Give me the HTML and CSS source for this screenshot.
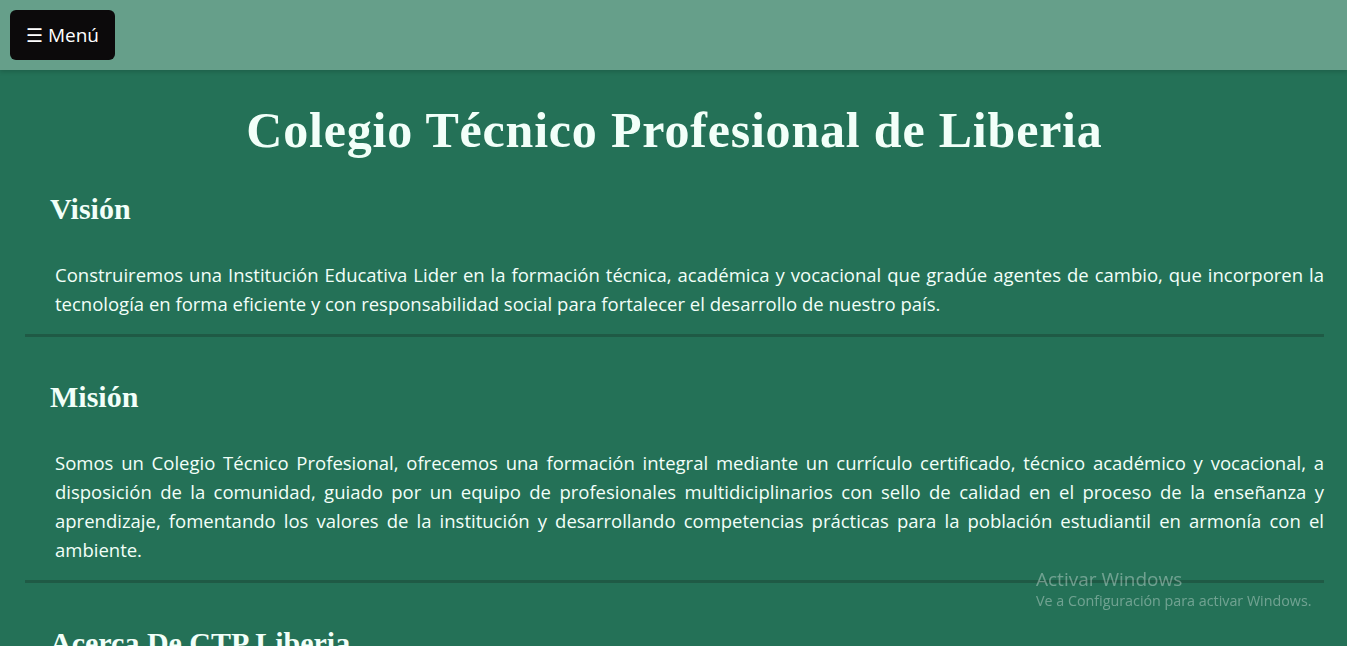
FILE: index.html
```html
<!DOCTYPE html>
<html lang="es">
<head>
<meta charset="utf-8">
<title>CTP Liberia</title>
<link rel="stylesheet" href="styles.css">
</head>
<body>
<header class="topbar">
  <button class="menu-btn">☰ Menú</button>
</header>
<main class="content">
  <h1 class="title">Colegio Técnico Profesional de Liberia</h1>
  <section class="block">
    <h2 class="block-title">Visión</h2>
    <p class="block-text">Construiremos una Institución Educativa Lider en la formación técnica, académica y vocacional que gradúe agentes de cambio, que incorporen la tecnología en forma eficiente y con responsabilidad social para fortalecer el desarrollo de nuestro país.</p>
  </section>
  <hr class="divider">
  <section class="block">
    <h2 class="block-title">Misión</h2>
    <p class="block-text">Somos un Colegio Técnico Profesional, ofrecemos una formación integral mediante un currículo certificado, técnico académico y vocacional, a disposición de la comunidad, guiado por un equipo de profesionales multidiciplinarios con sello de calidad en el proceso de la enseñanza y aprendizaje, fomentando los valores de la institución y desarrollando competencias prácticas para la población estudiantil en armonía con el ambiente.</p>
  </section>
  <hr class="divider">
  <section class="block">
    <h2 class="block-title">Acerca De CTP Liberia</h2>
  </section>
</main>
<div class="watermark">
  <div class="wm-title">Activar Windows</div>
  <div class="wm-sub">Ve a Configuración para activar Windows.</div>
</div>
</body>
</html>
```
FILE: styles.css
```css
html, body {
  margin: 0;
  padding: 0;
}
body {
  background: #247157;
  color: #f2fff9;
  font-family: "Open Sans", "Noto Sans", sans-serif;
  overflow: hidden;
  height: 646px;
}
.topbar {
  height: 70px;
  background: #669f8a;
  display: flex;
  align-items: center;
  padding-left: 10px;
  box-shadow: 0 2px 4px rgba(0,0,0,0.15);
}
.menu-btn {
  background: #0c0a0b;
  color: #ffffff;
  border: none;
  border-radius: 6px;
  width: 105px;
  height: 50px;
  font-family: "Open Sans", sans-serif;
  font-size: 19px;
  padding: 0;
}
.content {
  padding: 0 23px 0 25px;
}
.title {
  font-family: "Liberation Serif", serif;
  font-weight: bold;
  font-size: 50px;
  letter-spacing: 0.8px;
  text-align: center;
  margin: 41px 0 0;
  line-height: 38px;
}
.block {
  padding: 0 0 0 25px;
}
.block-title {
  font-family: "Liberation Serif", serif;
  font-weight: bold;
  font-size: 30px;
  margin: 42px 0 0;
  line-height: 36px;
}
.block-text {
  font-size: 18.5px;
  line-height: 29px;
  text-align: justify;
  margin: 33px 0 16px 5px;
}
.divider {
  border: none;
  height: 3px;
  background: #1f5a45;
  margin: 0;
}
.watermark {
  position: fixed;
  left: 1036px;
  top: 567px;
  color: rgba(255,255,255,0.35);
  font-family: "Open Sans", sans-serif;
}
.wm-title {
  font-size: 19px;
  line-height: 24px;
}
.wm-sub {
  font-size: 14.3px;
  line-height: 20px;
}
```
